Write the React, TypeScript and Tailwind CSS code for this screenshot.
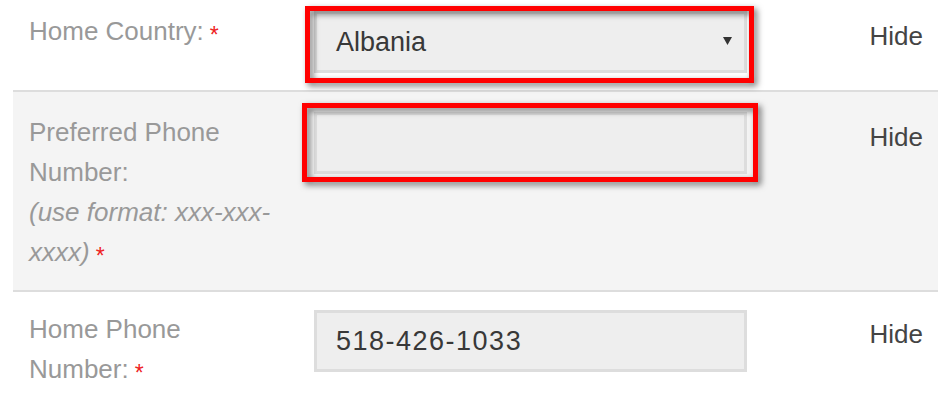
import React from "react";

function Req() {
  return <span className="relative top-[3px] ml-[6px] text-[23px] leading-none text-[#ee2424]">*</span>;
}

function Highlight({ children, box }: { children: React.ReactNode; box: string }) {
  return (
    <div className="relative">
      {children}
      <div
        className={`pointer-events-none absolute border-[5px] border-[#ff0000] drop-shadow-[3px_3px_3px_rgba(0,0,0,0.55)] ${box}`}
      />
    </div>
  );
}

function Field({ value, select, wide }: { value?: string; select?: boolean; wide?: boolean }) {
  return (
    <div className="flex h-[62px] w-[433px] items-center justify-between border-[3px] border-[#dddddd] bg-[#eeeeee] pl-[19px] pr-[12px] text-[27px] text-[#383838]">
      <span className={wide ? "tracking-[1.5px]" : ""}>{value}</span>
      {select && (
        <svg width="9" height="8" viewBox="0 0 9 8" className="mb-[2px]">
          <path d="M0 0h9L4.5 8z" fill="#333333" />
        </svg>
      )}
    </div>
  );
}

function Hide() {
  return <div className="flex-1 pt-[5px] text-right text-[26px] leading-[40px] text-[#444444]">Hide</div>;
}

export default function App() {
  return (
    <div className="h-[407px] w-[948px] overflow-hidden bg-white font-['Liberation_Sans',Arial,sans-serif]">
      <div className="ml-[13px] w-[925px]">
        {/* Home country */}
        <div className="flex items-start border-b-2 border-[#dddddd] pb-[17px] pl-4 pr-[15px] pt-[11px]">
          <div className="w-[285px] shrink-0 pr-[39px] text-[26px] leading-[40px] text-[#999999]">
            Home Country:
            <Req />
          </div>
          <Highlight box="-left-[9px] -right-[7px] -top-[5px] -bottom-[10px]">
            <Field value="Albania" select />
          </Highlight>
          <Hide />
        </div>

        {/* Preferred phone */}
        <div className="flex items-start border-b-2 border-[#dddddd] bg-[#f4f4f4] pb-[18px] pl-4 pr-[15px] pt-5">
          <div className="w-[285px] shrink-0 pr-[39px] text-[26px] leading-[40px] text-[#999999]">
            Preferred Phone Number:
            <br />
            <span className="italic">(use format: xxx-xxx-xxxx)</span>
            <Req />
          </div>
          <Highlight box="-left-[12px] -right-[11px] -top-[9px] -bottom-[8px]">
            <Field />
          </Highlight>
          <Hide />
        </div>

        {/* Home phone */}
        <div className="flex items-start pl-4 pr-[15px] pt-[17px]">
          <div className="w-[285px] shrink-0 pr-[39px] text-[26px] leading-[40px] text-[#999999]">
            Home Phone Number:
            <Req />
          </div>
          <div className="mt-px">
            <Field value="518-426-1033" wide />
          </div>
          <Hide />
        </div>
      </div>
    </div>
  );
}
